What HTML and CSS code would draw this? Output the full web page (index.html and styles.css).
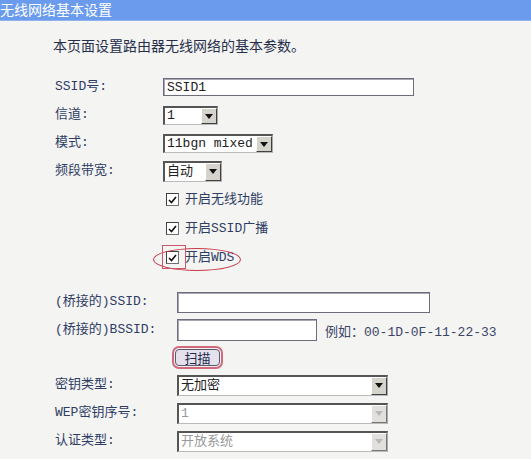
FILE: index.html
```html
<!DOCTYPE html>
<html lang="zh-CN">
<head>
    <meta charset="UTF-8">
    <meta name="viewport" content="width=device-width, initial-scale=1.0">
    <title>无线网络基本设置</title>
    <link rel="stylesheet" href="styles.css">
</head>
<body>

    <div class="title-bar">无线网络基本设置</div>

    <div class="content">
        <p class="intro">本页面设置路由器无线网络的基本参数。</p>

        <div class="basic-section">
            <div class="form-row">
                <span class="label">SSID号:</span>
                <input type="text" class="text-box ssid-box" value="SSID1">
            </div>
            <div class="form-row">
                <span class="label">信道:</span>
                <div class="select channel-select"><span class="value">1</span><span class="arrow"></span></div>
            </div>
            <div class="form-row">
                <span class="label">模式:</span>
                <div class="select mode-select"><span class="value">11bgn mixed</span><span class="arrow"></span></div>
            </div>
            <div class="form-row">
                <span class="label">频段带宽:</span>
                <div class="select width-select"><span class="value">自动</span><span class="arrow"></span></div>
            </div>

            <div class="check-row">
                <span class="check-box"><svg width="9" height="8" viewBox="0 0 9 8"><path d="M1 4 L3.5 6.5 L8 1" fill="none" stroke="#111" stroke-width="1.6"/></svg></span>
                <span class="check-text">开启无线功能</span>
            </div>
            <div class="check-row">
                <span class="check-box"><svg width="9" height="8" viewBox="0 0 9 8"><path d="M1 4 L3.5 6.5 L8 1" fill="none" stroke="#111" stroke-width="1.6"/></svg></span>
                <span class="check-text">开启SSID广播</span>
            </div>
            <div class="check-row">
                <span class="check-box"><svg width="9" height="8" viewBox="0 0 9 8"><path d="M1 4 L3.5 6.5 L8 1" fill="none" stroke="#111" stroke-width="1.6"/></svg></span>
                <span class="check-text">开启WDS</span>
                <span class="mark-ellipse"></span>
                <span class="mark-box"></span>
            </div>
        </div>

        <div class="wds-section">
            <div class="form-row">
                <span class="label">(桥接的)SSID:</span>
                <input type="text" class="text-box bridge-ssid">
            </div>
            <div class="form-row">
                <span class="label">(桥接的)BSSID:</span>
                <input type="text" class="text-box bridge-bssid">
                <span class="hint">例如：00-1D-0F-11-22-33</span>
            </div>
            <div class="form-row button-row">
                <span class="label"></span>
                <button class="scan-btn">扫描</button>
            </div>
            <div class="form-row">
                <span class="label">密钥类型:</span>
                <div class="select key-select"><span class="value">无加密</span><span class="arrow"></span></div>
            </div>
            <div class="form-row">
                <span class="label">WEP密钥序号:</span>
                <div class="select key-select disabled"><span class="value">1</span><span class="arrow"></span></div>
            </div>
            <div class="form-row">
                <span class="label">认证类型:</span>
                <div class="select key-select disabled"><span class="value">开放系统</span><span class="arrow"></span></div>
            </div>
            <div class="form-row">
                <span class="label"></span>
                <div class="next-box"></div>
            </div>
        </div>
    </div>

</body>
</html>
```

FILE: styles.css
```css
body {
    margin: 0;
    background-color: #f4f4f3;
    font-family: "Liberation Mono", "Noto Sans CJK SC", monospace;
    font-size: 13px;
    color: #2f3d63;
    overflow: hidden;
}
.title-bar {
    height: 20px;
    background: #6a9bec;
    border-bottom: 1px solid #8fb3ef;
    color: white;
    font-family: "Noto Sans CJK SC", sans-serif;
    font-size: 14px;
    line-height: 19px;
}
.content {
    padding-left: 55px;
}
.intro {
    margin: 14px 0 18px -2px;
    font-family: "Noto Sans CJK SC", sans-serif;
    font-size: 14px;
    line-height: 20px;
    color: #262f4a;
}
.form-row {
    display: flex;
    align-items: center;
    height: 28px;
}
.label {
    flex: none;
    width: 108px;
    line-height: 16px;
}
.wds-section .label {
    width: 122px;
}
.text-box {
    box-sizing: border-box;
    height: 18px;
    margin: 0;
    padding: 0 3px;
    background: white;
    border: 1px solid #6c6c7c;
    box-shadow: inset 1px 1px 0 #a8a8b4;
    font-family: inherit;
    font-size: 13px;
    color: #222;
}
.ssid-box {
    width: 251px;
}
.bridge-ssid {
    width: 253px;
    height: 21px;
}
.bridge-bssid {
    width: 140px;
    height: 22px;
}
.hint {
    margin-left: 8px;
    color: #3b4666;
}
.select {
    box-sizing: border-box;
    display: flex;
    align-items: center;
    height: 19px;
    background: white;
    border: 1px solid #555;
    border-top-width: 2px;
    border-left-width: 2px;
    border-right-color: #aaa;
    border-bottom-color: #bbb;
    color: #222;
}
.select .value {
    flex: 1;
    padding-left: 2px;
    white-space: nowrap;
    overflow: hidden;
    line-height: 15px;
}
.select .arrow {
    flex: none;
    position: relative;
    box-sizing: border-box;
    width: 16px;
    height: 100%;
    background: #d6d3cc;
    border-top: 1px solid #fff;
    border-left: 1px solid #fff;
    border-right: 1px solid #404040;
    border-bottom: 1px solid #404040;
}
.select .arrow::after {
    content: "";
    position: absolute;
    left: 3px;
    top: 5px;
    border-left: 4px solid transparent;
    border-right: 4px solid transparent;
    border-top: 5px solid #111;
}
.select.disabled {
    color: #9a9a9a;
}
.select.disabled .arrow {
    background: #e2e0dc;
    border-right-color: #777;
    border-bottom-color: #777;
}
.select.disabled .arrow::after {
    border-top-color: #b8b8b8;
}
.channel-select {
    width: 55px;
}
.mode-select {
    width: 110px;
}
.width-select {
    width: 59px;
    height: 21px;
}
.key-select {
    width: 211px;
    height: 21px;
}
.check-row {
    position: relative;
    display: flex;
    align-items: center;
    height: 29px;
    padding-left: 111px;
}
.check-box {
    box-sizing: border-box;
    display: flex;
    align-items: center;
    justify-content: center;
    width: 13px;
    height: 13px;
    background: white;
    border: 1px solid #707070;
    border-top-color: #404040;
    border-left-color: #404040;
}
.check-text {
    margin-left: 6px;
    line-height: 16px;
}
.mark-ellipse {
    position: absolute;
    left: 98px;
    top: 5px;
    width: 86px;
    height: 21px;
    border: 1px solid #c83a4a;
    border-radius: 50%;
}
.mark-box {
    position: absolute;
    left: 107px;
    top: 2px;
    width: 22px;
    height: 22px;
    border: 1px solid #c8586a;
}
.wds-section {
    margin-top: 16px;
}
.button-row {
    height: 27px;
}
.button-row .label {
    width: 120px;
}
.scan-btn {
    box-sizing: border-box;
    width: 45px;
    height: 17px;
    padding: 0;
    background: #e4e0ec;
    border: 1px solid #5a5a6a;
    border-radius: 4px;
    box-shadow: 0 0 0 1px #f4eef0, 0 0 0 3px #d06a7c;
    font-family: "Noto Sans CJK SC", sans-serif;
    font-size: 13px;
    line-height: 14px;
    color: #1f2a4a;
}
.next-box {
    align-self: flex-end;
    width: 313px;
    height: 10px;
    margin-bottom: -8px;
    background: white;
    border-top: 2px solid #8480d8;
}
```
